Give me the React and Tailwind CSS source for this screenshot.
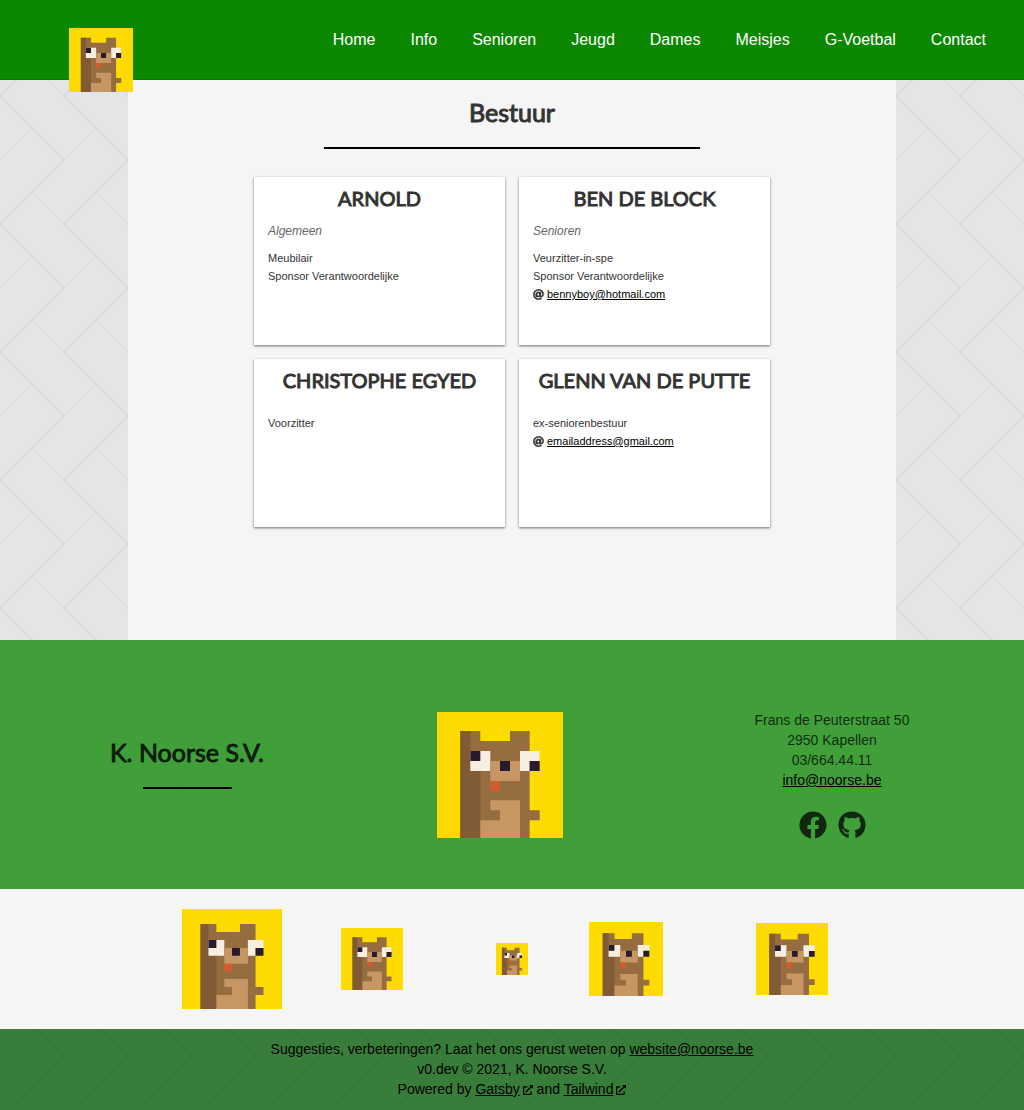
import { FaAt, FaExternalLinkAlt, FaFacebook, FaGithub } from "react-icons/fa";

const navItems = ["Home", "Info", "Senioren", "Jeugd", "Dames", "Meisjes", "G-Voetbal", "Contact"];

const members = [
  { name: "Arnold", team: "Algemeen", roles: ["Meubilair", "Sponsor Verantwoordelijke"] },
  {
    name: "Ben De Block",
    team: "Senioren",
    roles: ["Veurzitter-in-spe", "Sponsor Verantwoordelijke"],
    email: "bennyboy@hotmail.com",
  },
  { name: "Christophe Egyed", roles: ["Voorzitter"] },
  { name: "Glenn Van De Putte", roles: ["ex-seniorenbestuur"], email: "emailaddress@gmail.com" },
];

function Squirrel({ className }) {
  return (
    <svg viewBox="0 0 378 378" className={className} role="img" aria-label="K. Noorse S.V.">
      <path fill="#fdda00" d="M0 0h378v378H0z" />
      <path fill="#966d40" d="M70 57h60v30h89V57h59v238h30v30h-30v53H70z" />
      <path fill="#815b34" d="M70 57h30v120h30v201H70z" />
      <path fill="#f6efdf" d="M100 117h60v60h-60zM249 117h59v30h-30v30h-29z" />
      <path fill="#c69663" d="M160 147h89v60h-89zM160 265h89v113H130v-53h59v-30h-29z" />
      <path fill="#2a1a2e" d="M100 117h30v30h-30zM189 147h30v30h-30zM278 147h30v30h-30z" />
      <path fill="#d65a2f" d="M160 207h29v29h-29z" />
    </svg>
  );
}

function Herringbone() {
  return (
    <svg className="absolute inset-0 -z-10 h-full w-full" aria-hidden="true">
      <defs>
        <pattern id="herringbone" y="96" width="64" height="128" patternUnits="userSpaceOnUse">
          <g fill="none" stroke="#000" strokeOpacity="0.04">
            <path strokeWidth="2" d="M-2 -2L64 64L-2 130M62 -2L66 2M62 130L66 126" />
            <path strokeWidth="1" d="M32 32L0 64M32 96L64 128" />
          </g>
        </pattern>
      </defs>
      <rect width="100%" height="100%" fill="url(#herringbone)" />
    </svg>
  );
}

function TextLink({ href, children }) {
  return (
    <a href={href} className="text-black underline">
      {children}
    </a>
  );
}

function MemberCard({ name, team, roles, email }) {
  return (
    <article className="h-[168px] bg-white px-3.5 pt-[7px] text-[11px] leading-[18px] text-[#333] shadow-[0_1px_3px_rgba(0,0,0,0.25),0_1px_2px_rgba(0,0,0,0.35)]">
      <h2 className="text-center font-[Lato,sans-serif] text-xl leading-7 font-normal uppercase [-webkit-text-stroke:1px]">
        {name}
      </h2>
      {team ? <p className="mt-[9px] text-xs leading-5 text-[#666] italic">{team}</p> : null}
      <ul className={team ? "mt-2" : "mt-5"}>
        {roles.map((role) => (
          <li key={role}>{role}</li>
        ))}
      </ul>
      {email ? (
        <p className="flex items-center gap-[3px]">
          <FaAt aria-hidden="true" strokeWidth="10" className="h-[11px] w-[11px]" />
          <TextLink href={`mailto:${email}`}>{email}</TextLink>
        </p>
      ) : null}
    </article>
  );
}

export default function App() {
  return (
    <div className="relative isolate flex min-h-screen flex-col bg-[#e4e5e7] font-['Liberation_Sans',Arial,sans-serif]">
      <Herringbone />
      <header className="relative flex h-20 items-start justify-between bg-[#0b8800] pr-[38px] pl-[69px] shadow-[inset_0_-1px_0_rgba(0,0,0,0.12)]">
        <a href="#home" className="mt-7">
          <Squirrel className="h-16 w-16" />
        </a>
        <nav className="flex h-20 items-center gap-[35px]">
          {navItems.map((item) => (
            <a key={item} href={`#${item.toLowerCase()}`} className="text-base text-white">
              {item}
            </a>
          ))}
        </nav>
      </header>

      <main className="mx-auto w-3/4 grow bg-[#f5f5f5] pt-4">
        <h1 className="text-center font-[Lato,sans-serif] text-[25px] leading-8 font-normal text-[#333] [-webkit-text-stroke:1px]">
          Bestuur
        </h1>
        <hr className="mx-auto mt-[19px] w-[49%] border-t-2 border-black" />
        <section className="mx-auto mt-7 grid max-w-[516px] grid-cols-2 gap-3.5">
          {members.map((member) => (
            <MemberCard key={member.name} {...member} />
          ))}
        </section>
      </main>

      <footer className="text-sm leading-5">
        <div className="flex h-[249px] items-center justify-between bg-[#0b8800]/75 px-28 text-black/75">
          <div className="-mt-1 flex w-[150px] flex-col items-center">
            <h2 className="font-[Lato,sans-serif] text-[25px] leading-8 font-normal whitespace-nowrap [-webkit-text-stroke:1px]">
              K. Noorse S.V.
            </h2>
            <hr className="mt-[19px] w-[89px] border-t-2 border-black" />
          </div>
          <Squirrel className="mt-5 mr-3.5 h-[126px] w-[126px]" />
          <div className="mt-5 w-40 text-center">
            <address className="not-italic">
              Frans de Peuterstraat 50
              <br />
              2950 Kapellen
              <br />
              03/664.44.11
              <br />
              <TextLink href="mailto:info@noorse.be">info@noorse.be</TextLink>
            </address>
            <div className="mt-[21px] flex justify-center gap-[11px]">
              <a href="#facebook" aria-label="Facebook">
                <FaFacebook className="h-7 w-7" />
              </a>
              <a href="#github" aria-label="GitHub">
                <FaGithub className="h-7 w-7" />
              </a>
            </div>
          </div>
        </div>

        <div className="flex h-[140px] justify-center bg-[#f5f5f5]">
          <div className="flex w-[140px] items-center justify-center">
            <Squirrel className="h-[100px] w-[100px]" />
          </div>
          <div className="flex w-[140px] items-center justify-center">
            <Squirrel className="h-[62px] w-[62px]" />
          </div>
          <div className="flex w-[140px] items-center justify-center">
            <Squirrel className="h-8 w-8" />
          </div>
          <div className="flex w-[140px] items-center pl-[7px]">
            <Squirrel className="h-[74px] w-[74px]" />
          </div>
          <div className="flex w-[140px] items-center justify-center">
            <Squirrel className="h-[72px] w-[72px]" />
          </div>
        </div>

        <div className="bg-[#005a00]/75 pt-2.5 pb-[11px] text-center text-black">
          <p>
            Suggesties, verbeteringen? Laat het ons gerust weten op{" "}
            <TextLink href="mailto:website@noorse.be">website@noorse.be</TextLink>
          </p>
          <p>v0.dev © 2021, K. Noorse S.V.</p>
          <p>
            Powered by <TextLink href="#gatsby">Gatsby</TextLink>
            <FaExternalLinkAlt aria-hidden="true" className="ml-[3px] inline h-[10px] w-[10px]" /> and{" "}
            <TextLink href="#tailwind">Tailwind</TextLink>
            <FaExternalLinkAlt aria-hidden="true" className="ml-[3px] inline h-[10px] w-[10px]" />
          </p>
        </div>
      </footer>
    </div>
  );
}
